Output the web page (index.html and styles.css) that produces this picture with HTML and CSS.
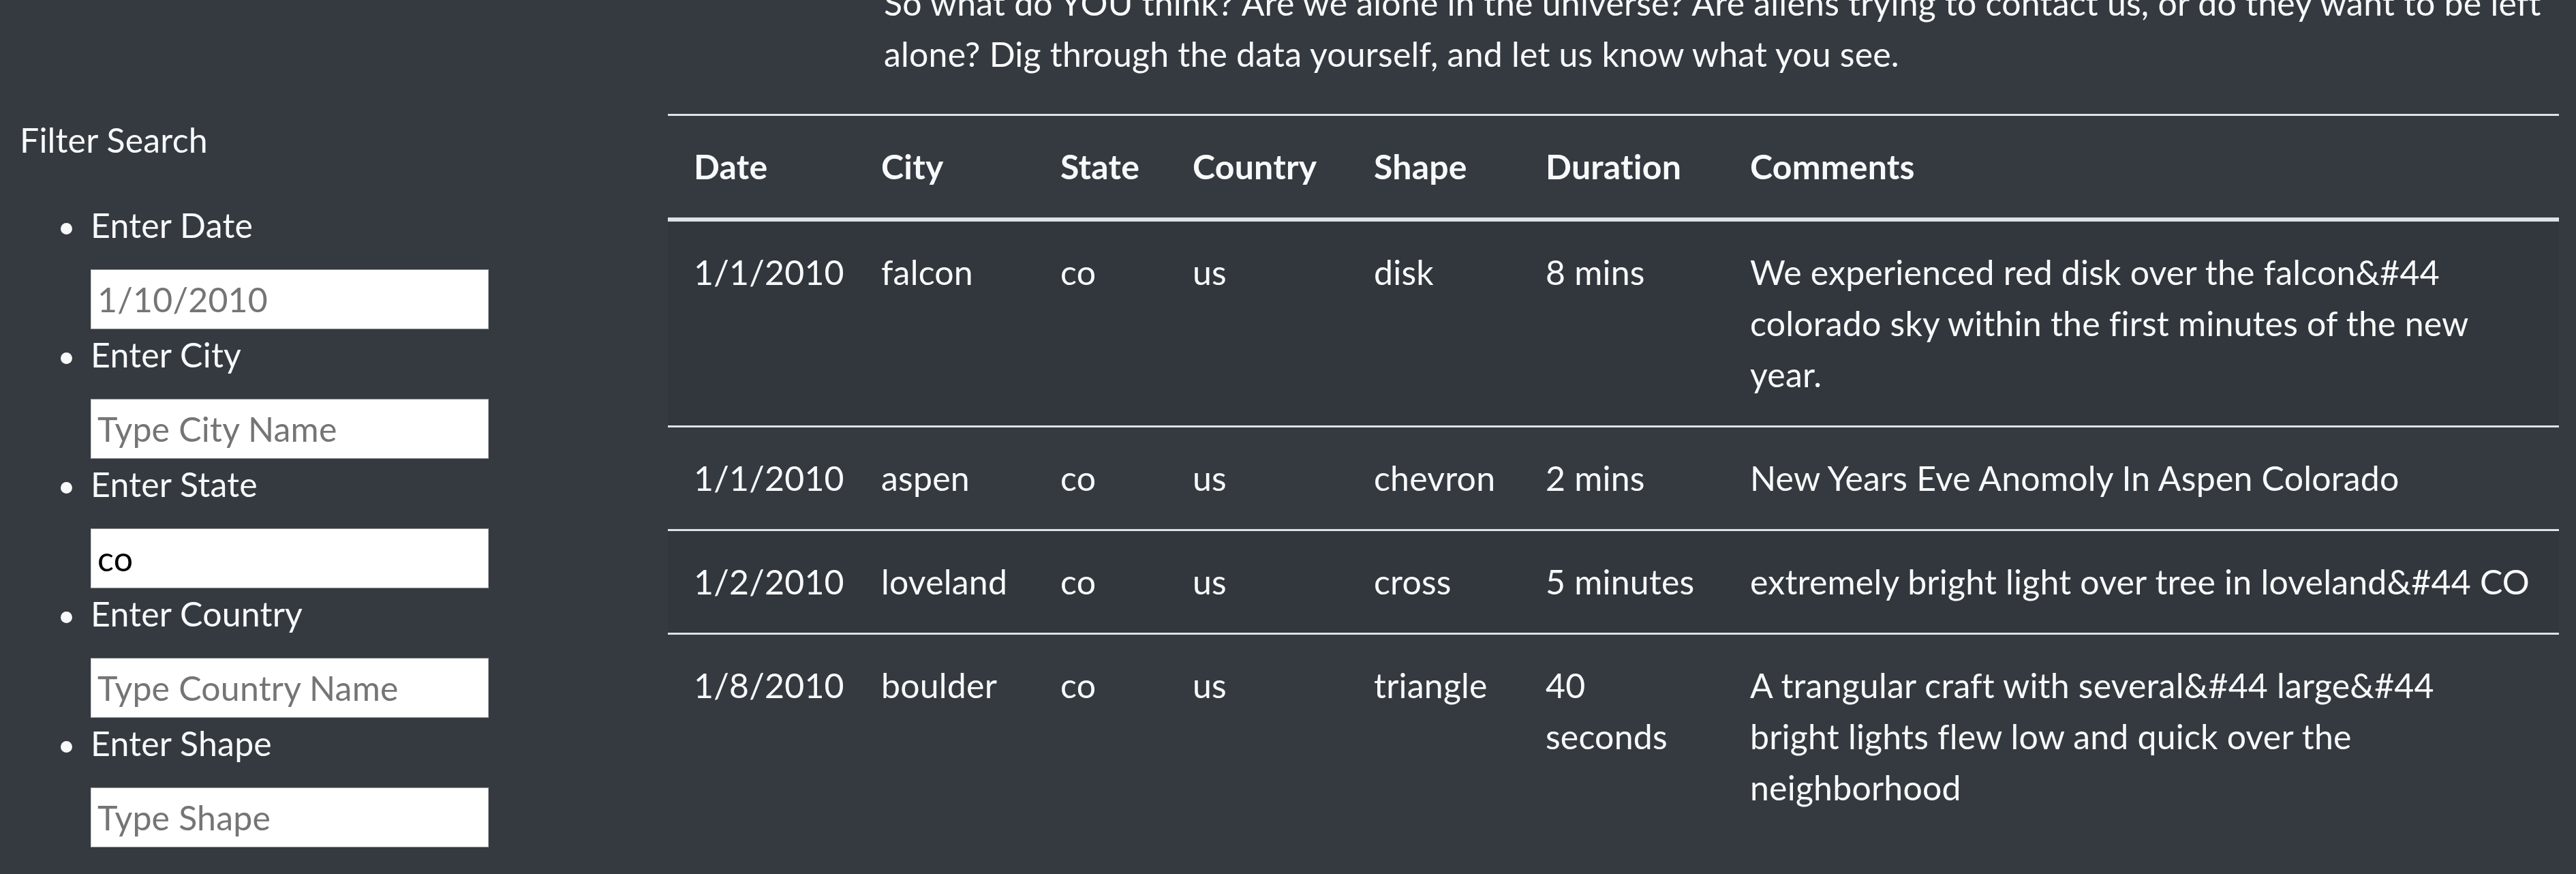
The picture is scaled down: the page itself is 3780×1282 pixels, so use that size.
FILE: index.html
```html
<!DOCTYPE html>
<html lang="en">
<head>
<meta charset="utf-8">
<title>UFO Sightings</title>
<link rel="stylesheet" href="styles.css">
</head>
<body>
<div class="page">
  <aside class="sidebar">
    <p class="filter-title">Filter Search</p>
    <ul class="filters">
      <li class="filter"><label for="datetime">Enter Date</label><input id="datetime" type="text" placeholder="1/10/2010"></li>
      <li class="filter"><label for="city">Enter City</label><input id="city" type="text" placeholder="Type City Name"></li>
      <li class="filter"><label for="state">Enter State</label><input id="state" type="text" value="co" placeholder="Type State Name"></li>
      <li class="filter"><label for="country">Enter Country</label><input id="country" type="text" placeholder="Type Country Name"></li>
      <li class="filter"><label for="shape">Enter Shape</label><input id="shape" type="text" placeholder="Type Shape"></li>
    </ul>
  </aside>
  <main class="content">
    <p class="intro">So what do YOU think? Are we alone in the universe? Are aliens trying to contact us, or do they want to be left<br>alone? Dig through the data yourself, and let us know what you see.</p>
    <table class="ufo-table">
      <colgroup>
        <col class="c-date"><col class="c-city"><col class="c-state"><col class="c-country"><col class="c-shape"><col class="c-duration"><col class="c-comments">
      </colgroup>
      <thead>
        <tr><th>Date</th><th>City</th><th>State</th><th>Country</th><th>Shape</th><th>Duration</th><th>Comments</th></tr>
      </thead>
      <tbody>
        <tr><td>1/1/2010</td><td>falcon</td><td>co</td><td>us</td><td>disk</td><td>8 mins</td><td>We experienced red disk over the falcon&amp;#44<br>colorado sky within the first minutes of the new<br>year.</td></tr>
        <tr><td>1/1/2010</td><td>aspen</td><td>co</td><td>us</td><td>chevron</td><td>2 mins</td><td>New Years Eve Anomoly In Aspen Colorado</td></tr>
        <tr><td>1/2/2010</td><td>loveland</td><td>co</td><td>us</td><td>cross</td><td>5 minutes</td><td>extremely bright light over tree in loveland&amp;#44 CO</td></tr>
        <tr><td>1/8/2010</td><td>boulder</td><td>co</td><td>us</td><td>triangle</td><td>40<br>seconds</td><td>A trangular craft with several&amp;#44 large&amp;#44<br>bright lights flew low and quick over the<br>neighborhood</td></tr>
      </tbody>
    </table>
  </main>
</div>
</body>
</html>
```

FILE: styles.css
```css
html, body {
  margin: 0;
  padding: 0;
  background: #343a40;
  height: 1282px;
  overflow: hidden;
}

body {
  font-family: Lato, "Liberation Sans", sans-serif;
  font-size: 50px;
  line-height: 75px;
  letter-spacing: 0.2px;
  color: #f8f9fa;
}

.page {
  display: flex;
  align-items: flex-start;
}

.sidebar {
  flex: none;
  width: 980px;
  box-sizing: border-box;
  padding: 168px 0 0 29px;
}

.filter-title {
  margin: 0 0 50px;
}

.filters {
  margin: 0;
  padding: 0 0 0 104px;
  list-style: none;
}

.filter label {
  display: flex;
  align-items: center;
  margin-bottom: 27px;
}

.filter label::before {
  content: "";
  flex: none;
  width: 17px;
  height: 17px;
  margin: 10px 27px 0 -44px;
  border-radius: 50%;
  background: #f8f9fa;
}

.filter input {
  display: block;
  box-sizing: border-box;
  width: 584px;
  height: 88px;
  margin: 0;
  padding: 0 9px;
  border: 1px solid #8f8f8f;
  border-left-color: #c8c8c8;
  border-right-color: #c8c8c8;
  background: #fff;
  color: #000;
  font-family: inherit;
  font-size: 50px;
  letter-spacing: 0.2px;
  outline: none;
}

.filter input::placeholder {
  color: #757575;
}

.content {
  flex: 1;
  min-width: 0;
  margin-top: -33px;
  padding-right: 25px;
}

.intro {
  margin: 0 0 50px 317px;
  white-space: nowrap;
}

.ufo-table {
  width: 100%;
  border-collapse: collapse;
  table-layout: fixed;
}

.c-date { width: 275px; }
.c-city { width: 263px; }
.c-state { width: 194px; }
.c-country { width: 266px; }
.c-shape { width: 252px; }
.c-duration { width: 300px; }

.ufo-table th,
.ufo-table td {
  padding: 37px 38px;
  text-align: left;
  vertical-align: top;
}

.ufo-table th {
  font-weight: 700;
  border-top: 3px solid #dee2e6;
  border-bottom: 6px solid #dee2e6;
}

.ufo-table td {
  border-top: 3px solid #dee2e6;
}

.ufo-table tbody tr:nth-child(odd) {
  background: rgba(0, 0, 0, 0.05);
}
```
